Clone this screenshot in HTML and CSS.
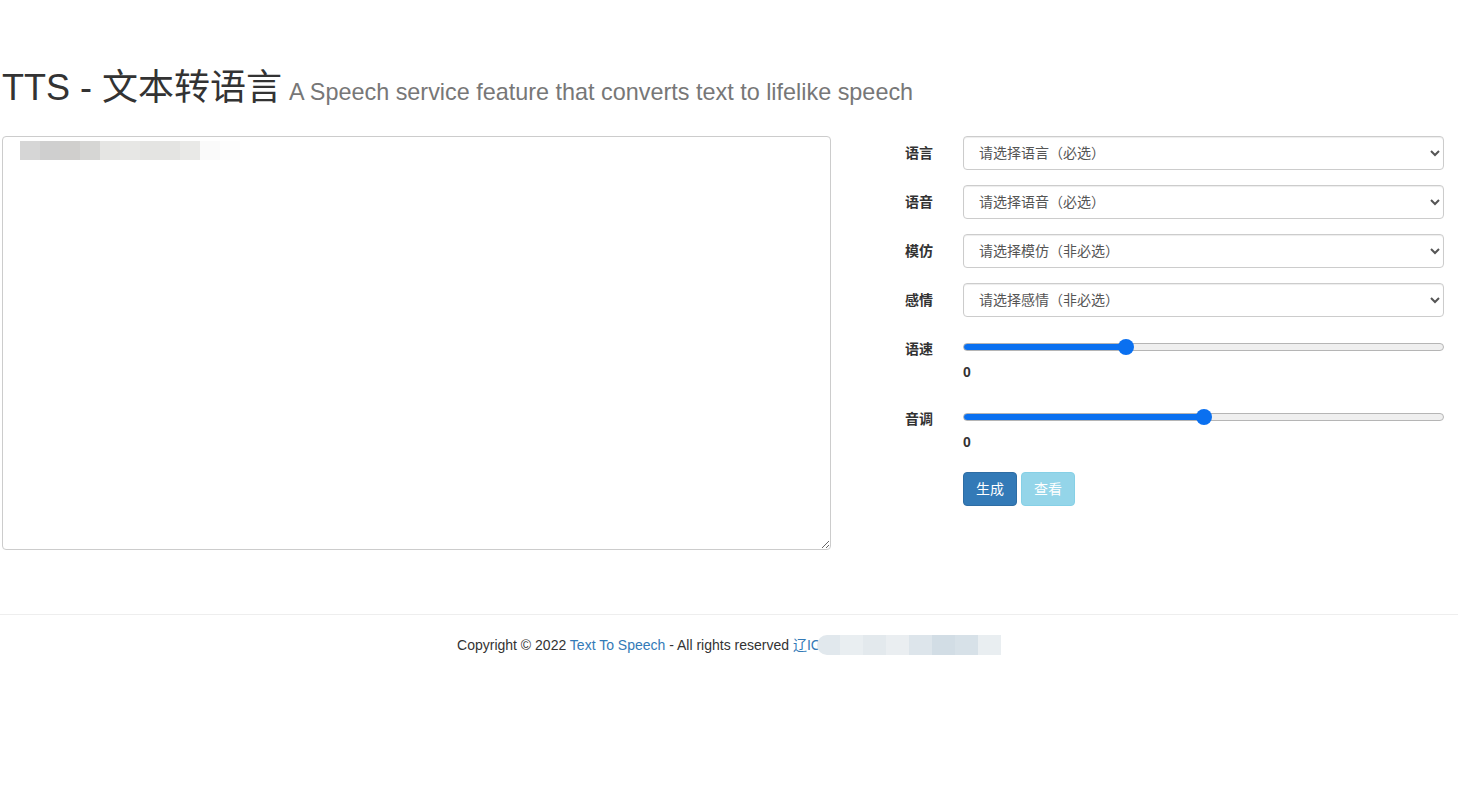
FILE: index.html
```html
<!DOCTYPE html>
<html lang="zh-CN">
<head>
    <meta charset="UTF-8">
    <meta name="viewport" content="width=device-width, initial-scale=1.0">
    <title>TTS - 文本转语言</title>
    <link rel="stylesheet" href="styles.css">
</head>

<body>
    <div class="page">
        <h1>TTS - 文本转语言 <small>A Speech service feature that converts text to lifelike speech</small></h1>

        <div class="main">
            <div class="editor">
                <textarea id="text" class="text-input"></textarea>
                <!-- blurred placeholder text -->
                <div class="mosaic">
                    <span style="background:#d6d6d6"></span>
                    <span style="background:#cfcfcf"></span>
                    <span style="background:#d0cfcd"></span>
                    <span style="background:#d6d6d4"></span>
                    <span style="background:#e5e5e3"></span>
                    <span style="background:#e7e7e5"></span>
                    <span style="background:#e4e4e2"></span>
                    <span style="background:#e4e4e2"></span>
                    <span style="background:#e9e9e7"></span>
                    <span style="background:#fafafa"></span>
                    <span style="background:#fdfdfd"></span>
                </div>
            </div>

            <form class="settings" id="tts-form">
                <div class="form-group">
                    <label for="language">语言</label>
                    <select id="language" class="form-control">
                        <option>请选择语言（必选）</option>
                    </select>
                </div>

                <div class="form-group">
                    <label for="voice">语音</label>
                    <select id="voice" class="form-control">
                        <option>请选择语音（必选）</option>
                    </select>
                </div>

                <div class="form-group">
                    <label for="style">模仿</label>
                    <select id="style" class="form-control">
                        <option>请选择模仿（非必选）</option>
                    </select>
                </div>

                <div class="form-group">
                    <label for="emotion">感情</label>
                    <select id="emotion" class="form-control">
                        <option>请选择感情（非必选）</option>
                    </select>
                </div>

                <div class="form-group slider-group">
                    <label for="rate">语速</label>
                    <div class="control">
                        <input type="range" id="rate" class="slider" min="0" max="3" step="0.1" value="1" style="--fill:33.3%">
                        <div class="slider-value" id="rate-value">0</div>
                    </div>
                </div>

                <div class="form-group slider-group">
                    <label for="pitch">音调</label>
                    <div class="control">
                        <input type="range" id="pitch" class="slider" min="0" max="2" step="0.1" value="1" style="--fill:50%">
                        <div class="slider-value" id="pitch-value">0</div>
                    </div>
                </div>

                <div class="form-group">
                    <span class="spacer"></span>
                    <div class="control">
                        <button type="submit" class="btn btn-primary">生成</button>
                        <button type="button" class="btn btn-info" disabled>查看</button>
                    </div>
                </div>
            </form>
        </div>
    </div>

    <footer class="footer">
        <p>Copyright © 2022 <a href="#">Text To Speech</a> - All rights reserved <a href="#">辽IC</a><span class="blur-icp">
            <span style="background:#e1e8ed"></span>
            <span style="background:#e9eef1"></span>
            <span style="background:#e3e9ed"></span>
            <span style="background:#eaeef1"></span>
            <span style="background:#dde5eb"></span>
            <span style="background:#d2dde5"></span>
            <span style="background:#d7e1e8"></span>
            <span style="background:#e9eef1"></span>
        </span></p>
    </footer>
</body>
</html>
```

FILE: styles.css
```css
body {
    font-family: "Liberation Sans", "Noto Sans CJK SC", sans-serif;
    font-size: 14px;
    line-height: 1.42857;
    color: #333;
    margin: 0;
    background-color: #fff;
}

.page {
    padding: 48px 14px 0 2px;
}

h1 {
    font-size: 36px;
    font-weight: normal;
    line-height: 1.1;
    margin: 20px 0 28px;
    color: #333;
}

h1 small {
    font-size: 65%;
    color: #777;
    margin-left: -3px;
}

.main {
    display: flex;
    align-items: flex-start;
}

.editor {
    position: relative;
    width: 829px;
}

.text-input {
    display: block;
    width: 829px;
    height: 414px;
    box-sizing: border-box;
    border: 1px solid #ccc;
    border-radius: 4px;
    padding: 6px 12px;
    font-family: inherit;
    font-size: 14px;
    resize: both;
}

.mosaic {
    position: absolute;
    top: 5px;
    left: 18px;
    display: flex;
}

.mosaic span {
    width: 20px;
    height: 19px;
}

.settings {
    flex: 1;
    margin-left: 74px;
}

.form-group {
    display: flex;
    align-items: flex-start;
    margin-bottom: 15px;
}

.form-group label,
.spacer {
    width: 58px;
    flex-shrink: 0;
    font-weight: bold;
    padding-top: 7px;
    line-height: 20px;
}

.form-control {
    flex: 1;
    height: 34px;
    padding: 6px 11px;
    font-family: inherit;
    font-size: 14px;
    color: #555;
    background-color: #fff;
    border: 1px solid #ccc;
    border-radius: 4px;
    box-shadow: inset 0 1px 1px rgba(0, 0, 0, 0.075);
}

.control {
    flex: 1;
}

.slider {
    -webkit-appearance: none;
    appearance: none;
    display: block;
    width: 100%;
    height: 30px;
    margin: 0;
    background: transparent;
}

.slider::-webkit-slider-runnable-track {
    height: 8px;
    box-sizing: border-box;
    border: 1px solid #b5b5b5;
    border-radius: 4px;
    background: linear-gradient(to right, #0a70f0 var(--fill), #efefef var(--fill));
}

.slider::-webkit-slider-thumb {
    -webkit-appearance: none;
    width: 16px;
    height: 16px;
    margin-top: -5px;
    border-radius: 50%;
    background: #0a70f0;
    border: none;
}

.slider-value {
    font-weight: bold;
    line-height: 20px;
    margin-bottom: 5px;
}

.btn {
    display: inline-block;
    height: 34px;
    padding: 6px 12px;
    font-family: inherit;
    font-size: 14px;
    line-height: 20px;
    border: 1px solid transparent;
    border-radius: 4px;
    color: #fff;
    cursor: pointer;
}

.btn-primary {
    background-color: #337ab7;
    border-color: #2e6da4;
}

.btn-info {
    background-color: #5bc0de;
    border-color: #46b8da;
}

.btn[disabled] {
    opacity: 0.65;
    cursor: not-allowed;
}

.footer {
    margin-top: 64px;
    border-top: 1px solid #eee;
    padding-top: 20px;
    text-align: center;
}

.footer p {
    margin: 0;
    line-height: 20px;
}

.footer a {
    color: #337ab7;
    text-decoration: none;
}

.blur-icp {
    display: inline-flex;
    vertical-align: -5px;
    margin-left: -4px;
}

.blur-icp span {
    width: 23px;
    height: 20px;
}

.blur-icp span:first-child {
    border-radius: 10px 0 0 10px;
}
```
